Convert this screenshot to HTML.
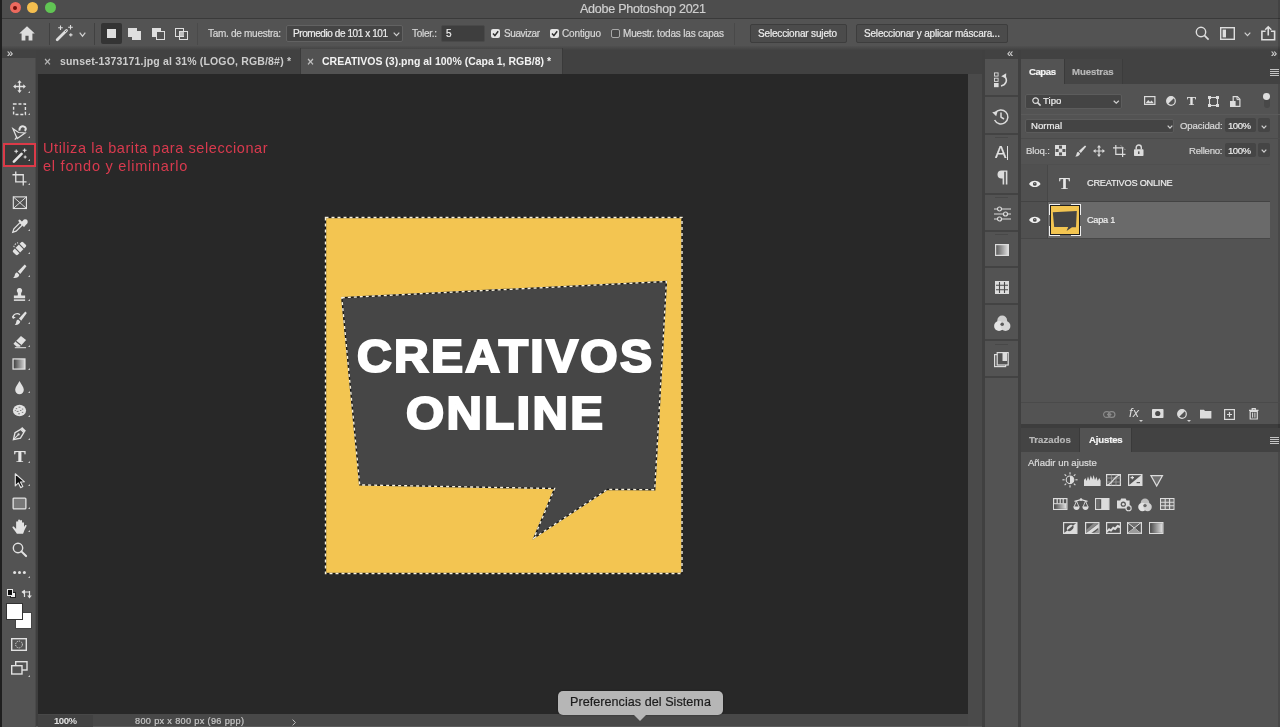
<!DOCTYPE html>
<html lang="es">
<head>
<meta charset="utf-8">
<title>Adobe Photoshop 2021</title>
<style>
*{box-sizing:border-box;margin:0;padding:0}
html,body{width:1280px;height:727px;overflow:hidden;background:#434343}
body{position:relative;font-family:"Liberation Sans",sans-serif;font-size:10px;color:#dcdcdc}
.a{position:absolute}
svg{position:absolute;overflow:visible}
.t{position:absolute;white-space:pre;will-change:transform;-webkit-text-stroke:0.2px currentColor}
.sep{position:absolute;width:1px;background:#404040}
.box{position:absolute;background:#454545;border:1px solid #626262;border-radius:2px}
.btn{position:absolute;background:#4b4b4b;border:1px solid #3d3d3d;border-radius:2px}
.cb{position:absolute;width:9px;height:9px;border-radius:2px;background:#e4e4e4}
.tri{position:absolute;width:0;height:0;border-left:2.5px solid transparent;border-bottom:2.5px solid #c4c4c4}
</style>
</head>
<body>
<div class="a" style="left:0px;top:0px;width:1280px;height:18px;background:#4d4d4d;"></div>
<div class="a" style="left:0px;top:17.5px;width:1280px;height:1.5px;background:#3a3a3a;"></div>
<div class="a" style="left:0px;top:19px;width:1280px;height:27px;background:#535353;"></div>
<div class="a" style="left:0px;top:46px;width:1280px;height:4px;background:linear-gradient(#505050,#424242);"></div>
<div class="a" style="left:982px;top:50px;width:298px;height:677px;background:#424242;"></div>
<div class="a" style="left:36px;top:50px;width:946px;height:24px;background:#414141;"></div>
<div class="a" style="left:36px;top:74px;width:3px;height:653px;background:#3e3e3e;"></div>
<div class="a" style="left:38px;top:74px;width:930px;height:640px;background:#282828;"></div>
<div class="a" style="left:968px;top:74px;width:14px;height:653px;background:#4a4a4a;"></div>
<div class="a" style="left:982px;top:50px;width:3px;height:677px;background:#404040;"></div>
<div class="a" style="left:38px;top:714px;width:930px;height:13px;background:#484848;"></div>
<div class="a" style="left:36px;top:726px;width:946px;height:1px;background:#5a5a5a;"></div>
<div class="a" style="left:2px;top:50px;width:34px;height:8px;background:#424242;"></div>
<div class="a" style="left:2px;top:58px;width:34px;height:669px;background:#535353;"></div>
<div class="a" style="left:35px;top:58px;width:1px;height:669px;background:#4a4a4a;"></div>
<div class="a" style="left:985px;top:59px;width:33px;height:668px;background:#535353;"></div>
<div class="a" style="left:1018px;top:50px;width:3px;height:677px;background:#404040;"></div>
<div class="a" style="left:1021px;top:59px;width:259px;height:365px;background:#535353;"></div>
<div class="a" style="left:1021px;top:424px;width:259px;height:4px;background:#3d3d3d;"></div>
<div class="a" style="left:1021px;top:428px;width:259px;height:299px;background:#535353;"></div>
<div class="a" style="left:1278px;top:0px;width:2px;height:727px;background:rgba(0,0,0,0.12);"></div>
<div class="a" style="left:0px;top:0px;width:2px;height:727px;background:#1f1f1f;"></div>
<div class="a" style="left:9.7px;top:2.4px;width:11px;height:11px;border-radius:50%;background:#ec6a5e"><div class="a" style="left:3.5px;top:3.5px;width:4px;height:4px;border-radius:50%;background:#6d0f0a"></div></div>
<div class="a" style="left:27.3px;top:2.4px;width:11px;height:11px;border-radius:50%;background:#f4be4f"></div>
<div class="a" style="left:45px;top:2.4px;width:11px;height:11px;border-radius:50%;background:#61c554"></div>
<div class="t" style="left:580px;top:2.0px;font-size:12.5px;line-height:15px;height:15px;letter-spacing:-0.246px;color:#d0d0d0;font-weight:400;font-family:'Liberation Sans',sans-serif;">Adobe Photoshop 2021</div>
<svg style="left:19px;top:26px" width="16" height="15" viewBox="0 0 16 15"><path d="M8 0.3 L0.2 7.6 H2.6 V14.6 H6.4 V9.8 H9.6 V14.6 H13.4 V7.6 H15.8 Z" fill="#dedede"/></svg>
<div class="a" style="left:49px;top:23px;width:1px;height:22px;background:#414141;"></div>
<svg style="left:55px;top:24px" width="20" height="18" viewBox="0 0 20 18"><path d="M2.2 15.8 L11.5 6.5" stroke="#dedede" stroke-width="2.8" stroke-linecap="round"/><path d="M10.2 7.8 L11.5 6.5" stroke="#535353" stroke-width="1" /><path d="M5.5 1.5 v4.6 M3.2 3.8 h4.6 M15.5 1 v4.6 M13.2 3.3 h4.6 M15.8 9.2 v3.4 M14.1 10.9 h3.4" stroke="#dedede" stroke-width="1.1"/></svg>
<svg style="left:79px;top:32px" width="7" height="5" viewBox="0 0 7 5"><path d="M0.7 0.7 L3.5 4.2 L6.3 0.7" fill="none" stroke="#d0d0d0" stroke-width="1.2"/></svg>
<div class="a" style="left:94px;top:23px;width:1px;height:22px;background:#414141;"></div>
<div class="a" style="left:101px;top:23px;width:21px;height:21px;background:#343434;border-radius:2px"></div>
<div class="a" style="left:107px;top:29px;width:9px;height:9px;background:#dedede;"></div>
<div class="a" style="left:128px;top:27.5px;width:9px;height:9px;background:#dedede;"></div>
<div class="a" style="left:132px;top:31px;width:9px;height:9px;background:#dedede;"></div>
<div class="a" style="left:152px;top:27.5px;width:9px;height:9px;background:#dedede;"></div>
<div class="a" style="left:155.5px;top:31px;width:9px;height:9px;background:#535353;border:1.5px solid #dedede"></div>
<div class="a" style="left:175px;top:27.5px;width:9px;height:9px;background:transparent;border:1.5px solid #dedede"></div>
<div class="a" style="left:178.5px;top:31px;width:9px;height:9px;background:transparent;border:1.5px solid #dedede"></div>
<div class="a" style="left:179.5px;top:32px;width:4px;height:4px;background:#bdbdbd;"></div>
<div class="a" style="left:197px;top:23px;width:1px;height:22px;background:#4a4a4a;"></div>
<div class="t" style="left:208px;top:27.5px;font-size:10px;line-height:12px;height:12px;letter-spacing:-0.284px;color:#d8d8d8;font-weight:400;font-family:'Liberation Sans',sans-serif;">Tam. de muestra:</div>
<div class="box" style="left:286px;top:25px;width:117px;height:17px"></div>
<div class="t" style="left:293px;top:27.5px;font-size:10px;line-height:12px;height:12px;letter-spacing:-0.420px;color:#ececec;font-weight:400;font-family:'Liberation Sans',sans-serif;">Promedio de 101 x 101</div>
<svg style="left:393px;top:32px" width="7" height="4.5" viewBox="0 0 7 4.5"><path d="M0.7 0.7 L3.5 3.7 L6.3 0.7" fill="none" stroke="#d0d0d0" stroke-width="1.2"/></svg>
<div class="t" style="left:412px;top:27.5px;font-size:10px;line-height:12px;height:12px;letter-spacing:-0.281px;color:#d8d8d8;font-weight:400;font-family:'Liberation Sans',sans-serif;">Toler.:</div>
<div class="a" style="left:441px;top:25px;width:44px;height:17px;background:#3e3e3e;border:1px solid #494949;border-radius:2px"></div>
<div class="t" style="left:445.5px;top:27.5px;font-size:10px;line-height:12px;height:12px;letter-spacing:-0.562px;color:#ececec;font-weight:400;font-family:'Liberation Sans',sans-serif;">5</div>
<div class="cb" style="left:491px;top:29px"></div>
<svg style="left:491px;top:29px" width="9" height="9" viewBox="0 0 9 9"><path d="M2 4.6 L3.9 6.6 L7.2 2.2" fill="none" stroke="#2e2e2e" stroke-width="1.5"/></svg>
<div class="t" style="left:504px;top:27.5px;font-size:10px;line-height:12px;height:12px;letter-spacing:-0.415px;color:#d8d8d8;font-weight:400;font-family:'Liberation Sans',sans-serif;">Suavizar</div>
<div class="cb" style="left:550px;top:29px"></div>
<svg style="left:550px;top:29px" width="9" height="9" viewBox="0 0 9 9"><path d="M2 4.6 L3.9 6.6 L7.2 2.2" fill="none" stroke="#2e2e2e" stroke-width="1.5"/></svg>
<div class="t" style="left:562px;top:27.5px;font-size:10px;line-height:12px;height:12px;letter-spacing:-0.147px;color:#d8d8d8;font-weight:400;font-family:'Liberation Sans',sans-serif;">Contiguo</div>
<div class="a" style="left:611px;top:29px;width:9px;height:9px;border:1px solid #a8a8a8;border-radius:2px;background:#484848"></div>
<div class="t" style="left:623px;top:27.5px;font-size:10px;line-height:12px;height:12px;letter-spacing:-0.185px;color:#d8d8d8;font-weight:400;font-family:'Liberation Sans',sans-serif;">Muestr. todas las capas</div>
<div class="a" style="left:734px;top:23px;width:1px;height:22px;background:#494949;"></div>
<div class="btn" style="left:750px;top:24px;width:97px;height:19px"></div>
<div class="t" style="left:758px;top:27.5px;font-size:10px;line-height:12px;height:12px;letter-spacing:-0.160px;color:#ececec;font-weight:400;font-family:'Liberation Sans',sans-serif;">Seleccionar sujeto</div>
<div class="btn" style="left:856px;top:24px;width:152px;height:19px"></div>
<div class="t" style="left:864px;top:27.5px;font-size:10px;line-height:12px;height:12px;letter-spacing:-0.185px;color:#ececec;font-weight:400;font-family:'Liberation Sans',sans-serif;">Seleccionar y aplicar m&aacute;scara...</div>
<svg style="left:1195px;top:26px" width="15" height="15" viewBox="0 0 15 15"><circle cx="6" cy="6" r="4.7" fill="none" stroke="#dedede" stroke-width="1.4"/><path d="M9.4 9.4 L13.6 13.6" stroke="#dedede" stroke-width="1.7"/></svg>
<svg style="left:1220px;top:27px" width="15" height="13" viewBox="0 0 15 13"><rect x="0.7" y="0.7" width="13.6" height="11.6" fill="none" stroke="#dedede" stroke-width="1.4"/><rect x="2.6" y="2.6" width="3.4" height="7.8" fill="#dedede"/></svg>
<svg style="left:1244px;top:32px" width="7" height="4.5" viewBox="0 0 7 4.5"><path d="M0.7 0.7 L3.5 3.7 L6.3 0.7" fill="none" stroke="#d0d0d0" stroke-width="1.2"/></svg>
<svg style="left:1261px;top:25.5px" width="14.5" height="14.5" viewBox="0 0 14.5 14.5"><path d="M4.6 5.2 H0.9 V13.7 H13.6 V5.2 H9.9" fill="none" stroke="#dedede" stroke-width="1.6"/><path d="M7.25 9.5 V1 M4.2 3.8 L7.25 0.8 L10.3 3.8" fill="none" stroke="#dedede" stroke-width="1.6"/></svg>
<div class="t" style="left:6.5px;top:47.0px;font-size:11px;line-height:13px;height:13px;letter-spacing:-0.125px;color:#d6d6d6;font-weight:400;font-family:'Liberation Sans',sans-serif;">&raquo;</div>
<div class="t" style="left:43.5px;top:54.5px;font-size:12px;line-height:14px;height:14px;letter-spacing:-0.016px;color:#bdbdbd;font-weight:400;font-family:'Liberation Sans',sans-serif;">&times;</div>
<div class="t" style="left:60px;top:55.0px;font-size:10.5px;line-height:13px;height:13px;letter-spacing:0.168px;color:#cdcdcd;font-weight:700;font-family:'Liberation Sans',sans-serif;-webkit-text-stroke:0;">sunset-1373171.jpg al 31% (LOGO, RGB/8#) *</div>
<div class="a" style="left:301px;top:48.5px;width:260.5px;height:25.5px;background:#525252;"></div>
<div class="a" style="left:300px;top:48px;width:1px;height:26px;background:#3a3a3a;"></div>
<div class="a" style="left:561.5px;top:48px;width:1px;height:26px;background:#3a3a3a;"></div>
<div class="t" style="left:307px;top:54.5px;font-size:12px;line-height:14px;height:14px;letter-spacing:-0.016px;color:#c8c8c8;font-weight:400;font-family:'Liberation Sans',sans-serif;">&times;</div>
<div class="t" style="left:322px;top:55.0px;font-size:10.5px;line-height:13px;height:13px;letter-spacing:-0.003px;color:#f2f2f2;font-weight:700;font-family:'Liberation Sans',sans-serif;-webkit-text-stroke:0;">CREATIVOS (3).png al 100% (Capa 1, RGB/8) *</div>
<div class="t" style="left:1007px;top:47.0px;font-size:11px;line-height:13px;height:13px;letter-spacing:-0.125px;color:#d6d6d6;font-weight:400;font-family:'Liberation Sans',sans-serif;">&laquo;</div>
<div class="t" style="left:1271px;top:47.0px;font-size:11px;line-height:13px;height:13px;letter-spacing:-0.125px;color:#d6d6d6;font-weight:400;font-family:'Liberation Sans',sans-serif;">&raquo;</div>
<div class="a" style="left:3px;top:142.5px;width:33px;height:24px;background:#3a3a3a;border:2px solid #dc3a48"></div>
<svg style="left:11.7px;top:79.0px" width="15" height="15" viewBox="0 0 16 16"><path d="M8 3 V13 M3 8 H13" stroke="#e2e2e2" stroke-width="1.4"/><path d="M8 1.2 L10.3 4 H5.7 Z M8 14.8 L10.3 12 H5.7 Z M1.2 8 L4 5.7 V10.3 Z M14.8 8 L12 5.7 V10.3 Z" fill="#e2e2e2"/></svg>
<div class="tri" style="left:28px;top:90.5px"></div>
<svg style="left:11.7px;top:101.5px" width="15" height="15" viewBox="0 0 16 16"><rect x="1.7" y="2.2" width="12.6" height="11.2" fill="none" stroke="#e2e2e2" stroke-width="1.5" stroke-dasharray="3.2 2"/></svg>
<div class="tri" style="left:28px;top:113px"></div>
<svg style="left:11.7px;top:124.5px" width="15" height="15" viewBox="0 0 16 16"><path d="M1 4 L5.5 14.5 L14 8.5 L7 8 Z" fill="none" stroke="#e2e2e2" stroke-width="1.3"/><path d="M8 6 C7.5 2.5 10 1 12.5 1.5 C15 2 15.5 5 13.5 6.2" fill="none" stroke="#e2e2e2" stroke-width="2.2"/><path d="M3 15.5 L5.5 12.5" stroke="#e2e2e2" stroke-width="1.3"/></svg>
<div class="tri" style="left:28px;top:136px"></div>
<svg style="left:11.7px;top:147.5px" width="15" height="15" viewBox="0 0 16 16"><path d="M2 14.5 L10.2 6.3" stroke="#e2e2e2" stroke-width="2.8" stroke-linecap="round"/><path d="M4.5 1.5 v4 M2.5 3.5 h4 M13.5 0.5 v4 M11.5 2.5 h4 M14 8 v3.2 M12.4 9.6 h3.2" stroke="#e2e2e2" stroke-width="1.1"/></svg>
<div class="tri" style="left:28px;top:159px"></div>
<svg style="left:11.7px;top:171.0px" width="15" height="15" viewBox="0 0 16 16"><path d="M4 0.5 V11.5 H15.5 M0.5 4 H12 V15.5" fill="none" stroke="#e2e2e2" stroke-width="1.4"/></svg>
<div class="tri" style="left:28px;top:182.5px"></div>
<svg style="left:11.7px;top:194.5px" width="15" height="15" viewBox="0 0 16 16"><rect x="1.4" y="2" width="14" height="12.4" fill="none" stroke="#e2e2e2" stroke-width="1.2"/><path d="M1.4 2 L15.4 14.4 M15.4 2 L1.4 14.4" stroke="#e2e2e2" stroke-width="1"/></svg>
<svg style="left:11.7px;top:217.5px" width="15" height="15" viewBox="0 0 16 16"><path d="M0.8 15.2 L2 11.6 L8.6 5 L11 7.4 L4.4 14 Z" fill="none" stroke="#e2e2e2" stroke-width="1.3"/><path d="M8 3 L13 8 M10.4 5.6 L12.6 3.4 a1.9 1.9 0 0 1 2.4 -0.6 a1.9 1.9 0 0 1 -0.4 3 L12.4 8" stroke="#e2e2e2" stroke-width="2.4" fill="#e2e2e2" stroke-linecap="round"/></svg>
<div class="tri" style="left:28px;top:229px"></div>
<svg style="left:11.7px;top:240.5px" width="15" height="15" viewBox="0 0 16 16"><g transform="rotate(-45 8 8)"><rect x="0.5" y="4.5" width="15" height="7" rx="1.5" fill="#e2e2e2"/><path d="M5 4.5 V11.5 M11 4.5 V11.5" stroke="#535353" stroke-width="1.2"/></g><path d="M2 6.5 A5 5 0 0 1 6.5 2" fill="none" stroke="#e2e2e2" stroke-width="1.1" stroke-dasharray="1.5 1.3"/></svg>
<div class="tri" style="left:28px;top:252px"></div>
<svg style="left:11.7px;top:263.5px" width="15" height="15" viewBox="0 0 16 16"><path d="M13.6 0.6 L15.4 2.4 L8.8 10.6 L6.2 8 Z" fill="#e2e2e2"/><path d="M5.4 9 L7.8 11.4 C7.4 14 4.5 15.4 1.2 14.8 C2.8 13.6 2.8 12 3.2 10.8 C3.6 9.6 4.6 9 5.4 9 Z" fill="#e2e2e2"/></svg>
<div class="tri" style="left:28px;top:275px"></div>
<svg style="left:11.7px;top:287.0px" width="15" height="15" viewBox="0 0 16 16"><path d="M8 1 a2.8 2.8 0 0 1 2.2 4.6 C9.6 6.6 9.6 8 10 9 H14 V12 H2 V9 H6 C6.4 8 6.4 6.6 5.8 5.6 A2.8 2.8 0 0 1 8 1 Z" fill="#e2e2e2"/><rect x="2" y="13.2" width="12" height="1.6" fill="#e2e2e2"/></svg>
<div class="tri" style="left:28px;top:298.5px"></div>
<svg style="left:11.7px;top:310.5px" width="15" height="15" viewBox="0 0 16 16"><path d="M14.2 0.6 L15.8 2.2 L9.8 10.4 L7.4 8 Z" fill="#e2e2e2"/><path d="M6.6 9 L8.8 11.2 C8.4 13.8 6 15.2 3 14.8 C4.4 13.6 4.4 12 4.7 10.9 C5 9.8 5.8 9 6.6 9 Z" fill="#e2e2e2"/><path d="M1 7.5 A4.5 4.5 0 0 1 8.5 4" fill="none" stroke="#e2e2e2" stroke-width="1.3"/><path d="M0 5 L1 8.6 L4 6.8 Z" fill="#e2e2e2"/></svg>
<div class="tri" style="left:28px;top:322px"></div>
<svg style="left:11.7px;top:333.5px" width="15" height="15" viewBox="0 0 16 16"><path d="M9.5 2 L15 6.5 L8.5 13.5 H5 L1.5 10.5 Z" fill="#e2e2e2"/><path d="M4.2 7.8 L9.8 12.2" stroke="#535353" stroke-width="1.2"/><path d="M3 14.6 H15" stroke="#e2e2e2" stroke-width="1.1"/></svg>
<div class="tri" style="left:28px;top:345px"></div>
<svg style="left:12px;top:357px" width="14" height="14" viewBox="0 0 16 16"><defs><linearGradient id="tg" x1="0" x2="1"><stop offset="0" stop-color="#3a3a3a"/><stop offset="1" stop-color="#d8d8d8"/></linearGradient></defs><rect x="1.2" y="2.2" width="13.6" height="11.6" fill="url(#tg)" stroke="#e2e2e2" stroke-width="1.4"/></svg>
<div class="tri" style="left:28px;top:368px"></div>
<svg style="left:11.7px;top:379.5px" width="15" height="15" viewBox="0 0 16 16"><path d="M8 1 C10 5 12.6 7.5 12.6 10.5 A4.6 4.6 0 0 1 3.4 10.5 C3.4 7.5 6 5 8 1 Z" fill="#e2e2e2"/></svg>
<div class="tri" style="left:28px;top:391px"></div>
<svg style="left:11.7px;top:403.0px" width="15" height="15" viewBox="0 0 16 16"><ellipse cx="8" cy="8" rx="7" ry="6.2" fill="#e2e2e2"/><path d="M4 6 h1.5 M7 4.5 h2 M10.5 6.5 h1.5 M5 9 h2 M8.5 8 h1.5 M6.5 11.5 h2 M10.5 10 h1.5 M3 8 h1" stroke="#777" stroke-width="1"/></svg>
<div class="tri" style="left:28px;top:414.5px"></div>
<svg style="left:11.7px;top:426.0px" width="15" height="15" viewBox="0 0 16 16"><path d="M1.5 14.5 L3.2 7.2 L9.2 3.6 L12.6 7 L9 13 Z" fill="none" stroke="#e2e2e2" stroke-width="1.4"/><path d="M1.8 14.2 L6.5 9.5" stroke="#e2e2e2" stroke-width="1.1"/><circle cx="7" cy="9" r="1.2" fill="#e2e2e2"/><path d="M10 2 L14 6" stroke="#e2e2e2" stroke-width="2.4"/></svg>
<div class="tri" style="left:28px;top:437.5px"></div>
<div class="t" style="left:13.8px;top:446.1px;font-size:17.5px;line-height:21px;height:21px;letter-spacing:0.512px;color:#e6e6e6;font-weight:700;font-family:'Liberation Serif',serif;">T</div>
<div class="tri" style="left:28px;top:461px"></div>
<svg style="left:11.7px;top:472.5px" width="15" height="15" viewBox="0 0 16 16"><path d="M3.5 0.8 L3.5 13.8 L6.8 10.6 L9.3 15.6 L11.5 14.5 L9 9.6 L13.3 9.4 Z" fill="#111" stroke="#e2e2e2" stroke-width="1.2" stroke-linejoin="round"/></svg>
<div class="tri" style="left:28px;top:484px"></div>
<svg style="left:11.7px;top:495.5px" width="15" height="15" viewBox="0 0 16 16"><rect x="1.2" y="2.2" width="13.6" height="11.6" rx="1" fill="#787878" stroke="#e2e2e2" stroke-width="1.4"/></svg>
<div class="tri" style="left:28px;top:507px"></div>
<svg style="left:12.299999999999999px;top:518.5px" width="15" height="15" viewBox="0 0 16 16"><path d="M5.2 15.6 C4 13.6 2 11.6 0.6 9.4 C0 8.2 1.4 7.4 2.4 8.4 L4.4 10.6 V3.4 a1.05 1.05 0 0 1 2.1 0 V7.6 V1.6 a1.05 1.05 0 0 1 2.1 0 V7.6 V2.2 a1.05 1.05 0 0 1 2.1 0 V8 V4.4 a1.05 1.05 0 0 1 2.1 0 V8.4 L14 6.6 C14.8 5.8 15.9 6.6 15.4 7.6 L13.2 12 C12.8 13.4 12.4 14.6 11.8 15.6 Z" fill="#e2e2e2"/></svg>
<div class="tri" style="left:28px;top:530px"></div>
<svg style="left:11.7px;top:541.5px" width="15" height="15" viewBox="0 0 16 16"><circle cx="6.4" cy="6.4" r="5" fill="none" stroke="#e2e2e2" stroke-width="1.5"/><path d="M10 10 L15 15" stroke="#e2e2e2" stroke-width="2.2" stroke-linecap="round"/></svg>
<svg style="left:11.7px;top:564.5px" width="15" height="15" viewBox="0 0 16 16"><circle cx="2.8" cy="8" r="1.6" fill="#e2e2e2"/><circle cx="8" cy="8" r="1.6" fill="#e2e2e2"/><circle cx="13.2" cy="8" r="1.6" fill="#e2e2e2"/></svg>
<div class="tri" style="left:28px;top:576px"></div>
<div class="a" style="left:9.5px;top:592px;width:6px;height:6px;background:#f0f0f0;border:0.5px solid #222"></div>
<div class="a" style="left:6.5px;top:589px;width:6.5px;height:6.5px;background:#0a0a0a;border:1px solid #e8e8e8"></div>
<svg style="left:21.5px;top:588.5px" width="10" height="10" viewBox="0 0 10 10"><path d="M2.5 8 V3 H7" fill="none" stroke="#e2e2e2" stroke-width="1.2"/><path d="M0.2 3.6 L2.5 0.4 L4.8 3.6 Z" transform="rotate(-90 2.5 3) translate(0 -0.5)" fill="#e2e2e2"/><path d="M7.5 2 V7.2" fill="none" stroke="#e2e2e2" stroke-width="1.2"/><path d="M5.2 6.4 L7.5 9.6 L9.8 6.4 Z" fill="#e2e2e2"/><path d="M0 3 L3 0.8 V5.2 Z" fill="#e2e2e2"/></svg>
<div class="a" style="left:15px;top:612px;width:16.5px;height:16.5px;background:#ffffff;border:1px solid #444"></div>
<div class="a" style="left:6px;top:603px;width:17px;height:16.5px;background:#ffffff;border:1px solid #333"></div>
<svg style="left:11px;top:638px" width="16" height="13" viewBox="0 0 16 13"><rect x="0.7" y="0.7" width="14.6" height="11.6" fill="none" stroke="#e2e2e2" stroke-width="1.4"/><circle cx="8" cy="6.5" r="3.4" fill="none" stroke="#e2e2e2" stroke-width="1" stroke-dasharray="1.2 1"/></svg>
<svg style="left:11px;top:661px" width="17" height="14" viewBox="0 0 17 14"><rect x="4.7" y="0.7" width="11.3" height="8.3" fill="none" stroke="#e2e2e2" stroke-width="1.4"/><rect x="0.7" y="4.7" width="10.3" height="8.3" fill="#535353" stroke="#e2e2e2" stroke-width="1.4"/></svg>
<div class="tri" style="left:28px;top:675px"></div>
<div class="t" style="left:43.2px;top:140.1px;font-size:14.5px;line-height:17px;height:17px;letter-spacing:0.578px;color:#d93a4e;font-weight:400;font-family:'Liberation Sans',sans-serif;-webkit-text-stroke:0;">Utiliza la barita para seleccionar</div>
<div class="t" style="left:43.2px;top:158.4px;font-size:14.5px;line-height:17px;height:17px;letter-spacing:0.767px;color:#d93a4e;font-weight:400;font-family:'Liberation Sans',sans-serif;-webkit-text-stroke:0;">el fondo y eliminarlo</div>
<svg style="left:0;top:0" width="1280" height="727" viewBox="0 0 1280 727"><rect x="325.5" y="217.5" width="356.5" height="356.0" fill="#f3c551"/><polygon points="341.8,297.7 666.4,281.5 654.7,489.7 607.3,489.4 534,538 554.6,488.5 359.7,484.9" fill="#464646"/><rect x="325.5" y="217.5" width="356.5" height="356.0" fill="none" stroke="#1a1a1a" stroke-width="1.4"/><rect x="325.5" y="217.5" width="356.5" height="356.0" fill="none" stroke="#f6f0dc" stroke-width="1.4" stroke-dasharray="3 3"/><polygon points="341.8,297.7 666.4,281.5 654.7,489.7 607.3,489.4 534,538 554.6,488.5 359.7,484.9" fill="none" stroke="#1a1a1a" stroke-width="1.4"/><polygon points="341.8,297.7 666.4,281.5 654.7,489.7 607.3,489.4 534,538 554.6,488.5 359.7,484.9" fill="none" stroke="#f6f0dc" stroke-width="1.4" stroke-dasharray="3 3"/></svg>
<div class="t" style="left:356.5px;top:328.9px;font-size:46px;line-height:55px;height:55px;letter-spacing:2.200px;color:#ffffff;font-weight:700;font-family:'Liberation Sans',sans-serif;transform:scaleX(1.0441);transform-origin:0 50%;-webkit-text-stroke:2.2px #fff;">CREATIVOS</div>
<div class="t" style="left:405.5px;top:386.1px;font-size:46px;line-height:55px;height:55px;letter-spacing:2.200px;color:#ffffff;font-weight:700;font-family:'Liberation Sans',sans-serif;transform:scaleX(1.0661);transform-origin:0 50%;-webkit-text-stroke:2.2px #fff;">ONLINE</div>
<div class="a" style="left:985px;top:94.5px;width:33px;height:2px;background:#434343;"></div>
<div class="a" style="left:985px;top:132.5px;width:33px;height:2px;background:#434343;"></div>
<div class="a" style="left:985px;top:192.5px;width:33px;height:2px;background:#434343;"></div>
<div class="a" style="left:985px;top:229.5px;width:33px;height:2px;background:#434343;"></div>
<div class="a" style="left:985px;top:266px;width:33px;height:2px;background:#434343;"></div>
<div class="a" style="left:985px;top:302.5px;width:33px;height:2px;background:#434343;"></div>
<div class="a" style="left:985px;top:339px;width:33px;height:2px;background:#434343;"></div>
<div class="a" style="left:985px;top:375.5px;width:33px;height:2px;background:#434343;"></div>
<div class="a" style="left:995px;top:137px;width:13px;height:1px;background:#484848;"></div>
<div class="a" style="left:995px;top:197px;width:13px;height:1px;background:#484848;"></div>
<div class="a" style="left:995px;top:234px;width:13px;height:1px;background:#484848;"></div>
<div class="a" style="left:995px;top:344px;width:13px;height:1px;background:#484848;"></div>
<svg style="left:993.5px;top:72px" width="15" height="15" viewBox="0 0 15 15"><rect x="0.5" y="0.9" width="3.6" height="3.2" fill="none" stroke="#dcdcdc" stroke-width="0.9"/><rect x="0.5" y="6.2" width="3.6" height="3.2" fill="none" stroke="#dcdcdc" stroke-width="0.9"/><rect x="0" y="11" width="4.6" height="4.2" fill="#dcdcdc"/><path d="M7 14 C12 13 14.5 8 10 3.5" fill="none" stroke="#dcdcdc" stroke-width="1.6"/><path d="M7.2 4.2 L12.2 1.2 L12 6.6 Z" fill="#dcdcdc"/></svg>
<svg style="left:992px;top:108px" width="17" height="17" viewBox="0 0 17 17"><path d="M3.2 4.8 A7 7 0 1 1 2.6 12" fill="none" stroke="#dcdcdc" stroke-width="1.5"/><path d="M0.2 4.2 L5.6 3.2 L4.2 8.2 Z" fill="#dcdcdc"/><path d="M9 4.5 V9.2 L12 11" fill="none" stroke="#dcdcdc" stroke-width="1.5"/></svg>
<div class="t" style="left:994.5px;top:142.5px;font-size:17px;line-height:20px;height:20px;letter-spacing:0.156px;color:#e2e2e2;font-weight:400;font-family:'Liberation Sans',sans-serif;">A</div>
<div class="a" style="left:1007.3px;top:145.5px;width:1.2px;height:14.5px;background:#e2e2e2;"></div>
<svg style="left:996.5px;top:170px" width="11" height="15" viewBox="0 0 11 15"><path d="M4.6 0.4 H10.4 V14.6 H8.8 V1.8 H7.2 V14.6 H5.6 V8.6 H4.6 A4.1 4.1 0 0 1 4.6 0.4 Z" fill="#dcdcdc"/></svg>
<svg style="left:993.5px;top:206px" width="17" height="16" viewBox="0 0 17 16"><path d="M0 3 H17 M0 8 H17 M0 13 H17" stroke="#dcdcdc" stroke-width="1.2"/><circle cx="5.5" cy="3" r="2" fill="#535353" stroke="#dcdcdc" stroke-width="1.2"/><circle cx="11.5" cy="8" r="2" fill="#535353" stroke="#dcdcdc" stroke-width="1.2"/><circle cx="5.5" cy="13" r="2" fill="#535353" stroke="#dcdcdc" stroke-width="1.2"/></svg>
<svg style="left:995px;top:244px" width="14" height="12" viewBox="0 0 14 12"><defs><linearGradient id="sg" x1="0" x2="1"><stop offset="0" stop-color="#555"/><stop offset="1" stop-color="#e0e0e0"/></linearGradient></defs><rect x="0.6" y="0.6" width="12.8" height="10.8" fill="url(#sg)" stroke="#dcdcdc" stroke-width="1.2"/></svg>
<svg style="left:995px;top:280.5px" width="14" height="13" viewBox="0 0 14 13"><rect x="0" y="0" width="14" height="13" fill="#dcdcdc"/><path d="M4.5 1 V12 M9.5 1 V12 M1 4.3 H13 M1 8.7 H13" stroke="#4a4a4a" stroke-width="1.1"/><rect x="5.6" y="5.2" width="2.8" height="2.6" fill="#dcdcdc"/></svg>
<svg style="left:993.5px;top:315px" width="16.5" height="16.5" viewBox="0 0 16.5 16.5"><circle cx="8.2" cy="5.4" r="4.9" fill="#cfcfcf"/><circle cx="5" cy="11" r="4.9" fill="#e4e4e4"/><circle cx="11.5" cy="11" r="4.9" fill="#d6d6d6"/><circle cx="8.2" cy="9.2" r="1.8" fill="#5a5a5a"/></svg>
<svg style="left:994px;top:352px" width="15" height="15.5" viewBox="0 0 15 15.5"><rect x="0.6" y="2.6" width="11" height="12" fill="none" stroke="#dcdcdc" stroke-width="1.2"/><rect x="3.2" y="0.6" width="11" height="12.4" fill="#535353" stroke="#dcdcdc" stroke-width="1.2"/><path d="M8.5 1 H13 V9 H8.5 Z" fill="#dcdcdc"/></svg>
<div class="a" style="left:1021px;top:59px;width:259px;height:25px;background:#424242;"></div>
<div class="a" style="left:1064px;top:59px;width:58px;height:25px;background:#454545;"></div>
<div class="a" style="left:1021px;top:59px;width:43px;height:26px;background:#535353;"></div>
<div class="a" style="left:1064px;top:59px;width:1px;height:25px;background:#3a3a3a;"></div>
<div class="a" style="left:1122px;top:59px;width:1px;height:25px;background:#3c3c3c;"></div>
<div class="t" style="left:1029px;top:65.7px;font-size:9.6px;line-height:12px;height:12px;letter-spacing:-0.449px;color:#f4f4f4;font-weight:700;font-family:'Liberation Sans',sans-serif;">Capas</div>
<div class="t" style="left:1072.4px;top:65.7px;font-size:9.6px;line-height:12px;height:12px;letter-spacing:-0.089px;color:#b8b8b8;font-weight:700;font-family:'Liberation Sans',sans-serif;">Muestras</div>
<div class="a" style="left:1270px;top:68.5px;width:9px;height:1px;background:#c4c4c4;"></div>
<div class="a" style="left:1270px;top:70.5px;width:9px;height:1px;background:#c4c4c4;"></div>
<div class="a" style="left:1270px;top:72.5px;width:9px;height:1px;background:#c4c4c4;"></div>
<div class="a" style="left:1270px;top:74.5px;width:9px;height:1px;background:#c4c4c4;"></div>
<div class="a" style="left:1025px;top:93.5px;width:96.5px;height:15px;background:#444444;border:1px solid #5c5c5c;border-radius:2px"></div>
<svg style="left:1031.5px;top:96.5px" width="9" height="9" viewBox="0 0 9 9"><circle cx="3.6" cy="3.6" r="2.8" fill="none" stroke="#dcdcdc" stroke-width="1.2"/><path d="M5.6 5.6 L8.6 8.6" stroke="#dcdcdc" stroke-width="1.5"/></svg>
<div class="t" style="left:1043.4px;top:95.0px;font-size:9.6px;line-height:12px;height:12px;letter-spacing:-0.004px;color:#ececec;font-weight:400;font-family:'Liberation Sans',sans-serif;">Tipo</div>
<svg style="left:1112.5px;top:99.5px" width="6.5" height="4" viewBox="0 0 6.5 4"><path d="M0.7 0.7 L3.25 3.2 L5.8 0.7" fill="none" stroke="#d0d0d0" stroke-width="1.2"/></svg>
<svg style="left:1144px;top:96.3px" width="11.5" height="9" viewBox="0 0 11.5 9"><rect x="0.6" y="0.6" width="10.3" height="7.8" fill="none" stroke="#dcdcdc" stroke-width="1.2"/><path d="M1.6 7.2 L4.2 4 L6 6 L7.6 4.6 L9.8 7.2 Z" fill="#dcdcdc"/></svg>
<svg style="left:1166px;top:96px" width="10" height="10" viewBox="0 0 10 10"><circle cx="5" cy="5" r="4.3" fill="none" stroke="#dcdcdc" stroke-width="1.2"/><path d="M8.04 1.96 A4.3 4.3 0 0 0 1.96 8.04 Z" fill="#dcdcdc"/></svg>
<div class="t" style="left:1187px;top:93.0px;font-size:13.5px;line-height:16px;height:16px;letter-spacing:0.784px;color:#e4e4e4;font-weight:700;font-family:'Liberation Serif',serif;">T</div>
<svg style="left:1208px;top:95.5px" width="11" height="11" viewBox="0 0 11 11"><rect x="1.5" y="1.5" width="8" height="8" fill="none" stroke="#dcdcdc" stroke-width="1.1"/><rect x="0" y="0" width="3" height="3" fill="#dcdcdc"/><rect x="8" y="0" width="3" height="3" fill="#dcdcdc"/><rect x="0" y="8" width="3" height="3" fill="#dcdcdc"/><rect x="8" y="8" width="3" height="3" fill="#dcdcdc"/></svg>
<svg style="left:1230.4px;top:95.5px" width="10.5" height="11" viewBox="0 0 10.5 11"><path d="M3.2 0.6 H7.4 L9.9 3.2 V10.4 H3.2 Z" fill="none" stroke="#dcdcdc" stroke-width="1.2"/><path d="M7 0.6 V3.6 H9.9" fill="none" stroke="#dcdcdc" stroke-width="1"/><rect x="0" y="5" width="5.6" height="6" fill="#dcdcdc"/></svg>
<div class="a" style="left:1263.6px;top:95px;width:6.6px;height:13.2px;background:#484848;border-radius:3.3px"></div>
<div class="a" style="left:1263.4px;top:93.2px;width:6.8px;height:6.8px;background:#dedede;border-radius:50%"></div>
<div class="a" style="left:1021px;top:114px;width:259px;height:1px;background:#5a5a5a;"></div>
<div class="a" style="left:1025px;top:118.5px;width:149px;height:14.5px;background:#444444;border:1px solid #5c5c5c;border-radius:2px"></div>
<div class="t" style="left:1030.6px;top:120.0px;font-size:9.6px;line-height:12px;height:12px;letter-spacing:0.036px;color:#ececec;font-weight:400;font-family:'Liberation Sans',sans-serif;">Normal</div>
<svg style="left:1166.5px;top:124.5px" width="6" height="4" viewBox="0 0 6 4"><path d="M0.7 0.7 L3.0 3.2 L5.3 0.7" fill="none" stroke="#d0d0d0" stroke-width="1.2"/></svg>
<div class="t" style="left:1179.5px;top:120.0px;font-size:9.6px;line-height:12px;height:12px;letter-spacing:-0.129px;color:#d8d8d8;font-weight:400;font-family:'Liberation Sans',sans-serif;">Opacidad:</div>
<div class="a" style="left:1225px;top:118px;width:31px;height:14.2px;background:#454545;border-radius:2px"></div>
<div class="t" style="left:1228.3px;top:120.0px;font-size:9.6px;line-height:12px;height:12px;letter-spacing:-0.516px;color:#ececec;font-weight:400;font-family:'Liberation Sans',sans-serif;">100%</div>
<div class="a" style="left:1258px;top:118px;width:11.5px;height:14.2px;background:#454545;border-radius:2px"></div>
<svg style="left:1260.8px;top:124.5px" width="6" height="4" viewBox="0 0 6 4"><path d="M0.7 0.7 L3.0 3.2 L5.3 0.7" fill="none" stroke="#d0d0d0" stroke-width="1.2"/></svg>
<div class="a" style="left:1021px;top:137.5px;width:259px;height:1px;background:#4b4b4b;"></div>
<div class="t" style="left:1025.5px;top:144.5px;font-size:9.6px;line-height:12px;height:12px;letter-spacing:-0.109px;color:#d8d8d8;font-weight:400;font-family:'Liberation Sans',sans-serif;">Bloq.:</div>
<svg style="left:1055px;top:145px" width="11" height="11" viewBox="0 0 11 11"><rect x="0" y="0" width="11" height="11" fill="#dcdcdc"/><rect x="4.0" y="0.6" width="3" height="3" fill="#555"/><rect x="0.6" y="4.0" width="3" height="3" fill="#555"/><rect x="7.3999999999999995" y="4.0" width="3" height="3" fill="#555"/><rect x="4.0" y="7.3999999999999995" width="3" height="3" fill="#555"/></svg>
<svg style="left:1075px;top:144.5px" width="11.5" height="12" viewBox="0 0 11.5 12"><path d="M10 0.4 L11.2 1.6 L5.8 8 L3.8 6 Z" fill="#dcdcdc"/><path d="M3.2 6.8 L5 8.6 C4.8 10.6 2.8 11.8 0.2 11.4 C1.4 10.6 1.4 9.4 1.7 8.5 C2 7.5 2.6 6.9 3.2 6.8 Z" fill="#dcdcdc"/></svg>
<svg style="left:1093px;top:144.5px" width="12" height="12" viewBox="0 0 12 12"><path d="M6 1.5 V10.5 M1.5 6 H10.5" stroke="#dcdcdc" stroke-width="1.2"/><path d="M6 0 L8 2.6 H4 Z M6 12 L8 9.4 H4 Z M0 6 L2.6 4 V8 Z M12 6 L9.4 4 V8 Z" fill="#dcdcdc"/></svg>
<svg style="left:1113px;top:144.5px" width="12.5" height="12" viewBox="0 0 12.5 12"><path d="M2.8 0 V9.4 H12.5 M0 2.8 H9.6 V12" fill="none" stroke="#dcdcdc" stroke-width="1.2"/><path d="M8 0.6 L12 4.6" stroke="#dcdcdc" stroke-width="1" stroke-dasharray="1.2 1"/></svg>
<svg style="left:1134px;top:144px" width="9.5" height="12" viewBox="0 0 9.5 12"><path d="M2.2 5.5 V3.6 a2.55 2.55 0 0 1 5.1 0 V5.5" fill="none" stroke="#dcdcdc" stroke-width="1.4"/><rect x="0" y="5.2" width="9.5" height="6.8" rx="0.8" fill="#dcdcdc"/><rect x="4" y="7.4" width="1.5" height="2.6" fill="#555"/></svg>
<div class="t" style="left:1188.7px;top:144.5px;font-size:9.6px;line-height:12px;height:12px;letter-spacing:-0.243px;color:#d8d8d8;font-weight:400;font-family:'Liberation Sans',sans-serif;">Relleno:</div>
<div class="a" style="left:1225px;top:142.6px;width:31px;height:14.2px;background:#454545;border-radius:2px"></div>
<div class="t" style="left:1228.3px;top:144.5px;font-size:9.6px;line-height:12px;height:12px;letter-spacing:-0.516px;color:#ececec;font-weight:400;font-family:'Liberation Sans',sans-serif;">100%</div>
<div class="a" style="left:1258px;top:142.6px;width:11.5px;height:14.2px;background:#454545;border-radius:2px"></div>
<svg style="left:1260.8px;top:149px" width="6" height="4" viewBox="0 0 6 4"><path d="M0.7 0.7 L3.0 3.2 L5.3 0.7" fill="none" stroke="#d0d0d0" stroke-width="1.2"/></svg>
<div class="a" style="left:1021px;top:163.5px;width:249px;height:1px;background:#4f4f4f;"></div>
<div class="a" style="left:1021px;top:164.5px;width:25.5px;height:73px;background:#505050;"></div>
<div class="a" style="left:1046.5px;top:164.5px;width:1px;height:73px;background:#474747;"></div>
<div class="a" style="left:1021px;top:201px;width:249px;height:1px;background:#434343;"></div>
<div class="a" style="left:1047.5px;top:202px;width:222.5px;height:35.5px;background:#6a6a6a;"></div>
<div class="a" style="left:1021px;top:237.5px;width:249px;height:1px;background:#474747;"></div>
<svg style="left:1028.5px;top:179.6px" width="11.6" height="7.8" viewBox="0 0 11.6 7.8"><path d="M0 3.9 C2.4 -0.2 9.2 -0.2 11.6 3.9 C9.2 8 2.4 8 0 3.9 Z" fill="#eeeeee"/><circle cx="5.8" cy="3.9" r="1.9" fill="#4a4a4a"/><circle cx="5.8" cy="3.3" r="0.6" fill="#bbb"/></svg>
<svg style="left:1028.5px;top:216.1px" width="11.6" height="7.8" viewBox="0 0 11.6 7.8"><path d="M0 3.9 C2.4 -0.2 9.2 -0.2 11.6 3.9 C9.2 8 2.4 8 0 3.9 Z" fill="#eeeeee"/><circle cx="5.8" cy="3.9" r="1.9" fill="#4a4a4a"/><circle cx="5.8" cy="3.3" r="0.6" fill="#bbb"/></svg>
<div class="t" style="left:1059px;top:173.6px;font-size:16.5px;line-height:20px;height:20px;letter-spacing:1.184px;color:#e6e6e6;font-weight:700;font-family:'Liberation Serif',serif;">T</div>
<div class="t" style="left:1086.7px;top:177.5px;font-size:9.2px;line-height:11px;height:11px;letter-spacing:-0.231px;color:#ececec;font-weight:400;font-family:'Liberation Sans',sans-serif;">CREATIVOS ONLINE</div>
<div class="t" style="left:1086.7px;top:214.5px;font-size:9.2px;line-height:11px;height:11px;letter-spacing:-0.268px;color:#f0f0f0;font-weight:400;font-family:'Liberation Sans',sans-serif;">Capa 1</div>
<div class="a" style="left:1049px;top:203.5px;width:32px;height:32.5px;background:#f0f0f0;"></div>
<div class="a" style="left:1048.5px;top:214.5px;width:33px;height:11.5px;background:#6a6a6a;"></div>
<div class="a" style="left:1060px;top:203px;width:10.7px;height:33.5px;background:#6a6a6a;"></div>
<div class="a" style="left:1050px;top:204.5px;width:30px;height:30.5px;background:#1e1e1e;"></div>
<div class="a" style="left:1051.2px;top:205.7px;width:27.6px;height:28.1px;background:#f3c551;"></div>
<svg style="left:1051.2px;top:205.7px" width="27.6" height="28.1" viewBox="0 0 27.6 28.1"><polygon points="1.8,6.2 25.8,5 25,21.2 21,21.2 15.6,25 17.2,21.1 3.2,20.9" fill="#454545"/></svg>
<div class="a" style="left:1021px;top:402px;width:259px;height:1px;background:#4a4a4a;"></div>
<svg style="left:1103px;top:410.5px" width="12.5" height="7" viewBox="0 0 12.5 7"><rect x="0.6" y="0.6" width="6.6" height="5.8" rx="2.9" fill="none" stroke="#8a8a8a" stroke-width="1.2"/><rect x="5.3" y="0.6" width="6.6" height="5.8" rx="2.9" fill="none" stroke="#8a8a8a" stroke-width="1.2"/><path d="M4 3.5 H8.5" stroke="#8a8a8a" stroke-width="1.2"/></svg>
<div class="t" style="left:1128.7px;top:405.7px;font-size:12.5px;line-height:15px;height:15px;letter-spacing:0.166px;color:#dcdcdc;font-weight:400;font-family:'Liberation Sans',sans-serif;font-style:italic;-webkit-text-stroke:0;">fx</div>
<div class="a" style="left:1138.5px;top:419.5px;width:0;height:0;border-left:2px solid transparent;border-right:2px solid transparent;border-top:2.5px solid #d0d0d0"></div>
<svg style="left:1152px;top:409px" width="11.5" height="9" viewBox="0 0 11.5 9"><rect x="0" y="0" width="11.5" height="9" rx="0.8" fill="#dcdcdc"/><circle cx="5.75" cy="4.5" r="2.6" fill="#4a4a4a"/></svg>
<svg style="left:1177px;top:409px" width="10" height="10" viewBox="0 0 10 10"><circle cx="5" cy="5" r="4.3" fill="none" stroke="#dcdcdc" stroke-width="1.2"/><path d="M8.04 1.96 A4.3 4.3 0 0 0 1.96 8.04 Z" fill="#dcdcdc"/></svg>
<div class="a" style="left:1187px;top:419.5px;width:0;height:0;border-left:2px solid transparent;border-right:2px solid transparent;border-top:2.5px solid #d0d0d0"></div>
<svg style="left:1199.8px;top:408.8px" width="11.4" height="9.4" viewBox="0 0 11.4 9.4"><path d="M0 0.8 H4 L5 2 H11.4 V9.4 H0 Z" fill="#dcdcdc"/></svg>
<svg style="left:1224px;top:408.5px" width="11" height="11" viewBox="0 0 11 11"><rect x="0.6" y="0.6" width="9.8" height="9.8" fill="none" stroke="#dcdcdc" stroke-width="1.2"/><path d="M5.5 3 V8 M3 5.5 H8" stroke="#dcdcdc" stroke-width="1.2"/></svg>
<svg style="left:1249px;top:408px" width="9.5" height="11.5" viewBox="0 0 9.5 11.5"><path d="M0 2.4 H9.5 M3.2 2.2 V0.6 H6.3 V2.2" fill="none" stroke="#dcdcdc" stroke-width="1.2"/><path d="M1.2 3.4 H8.3 V11 H1.2 Z" fill="none" stroke="#dcdcdc" stroke-width="1.2"/><path d="M3.6 4.6 V9.6 M5.9 4.6 V9.6" stroke="#dcdcdc" stroke-width="1"/></svg>
<div class="a" style="left:1021px;top:428px;width:259px;height:24px;background:#424242;"></div>
<div class="a" style="left:1021px;top:428px;width:58.5px;height:24px;background:#444444;"></div>
<div class="a" style="left:1080px;top:428px;width:50.5px;height:25px;background:#535353;"></div>
<div class="a" style="left:1079px;top:428px;width:1px;height:24px;background:#3a3a3a;"></div>
<div class="a" style="left:1130.5px;top:428px;width:1px;height:24px;background:#3a3a3a;"></div>
<div class="t" style="left:1029px;top:433.7px;font-size:9.6px;line-height:12px;height:12px;letter-spacing:0.029px;color:#b8b8b8;font-weight:700;font-family:'Liberation Sans',sans-serif;">Trazados</div>
<div class="t" style="left:1088.5px;top:433.7px;font-size:9.6px;line-height:12px;height:12px;letter-spacing:-0.159px;color:#f4f4f4;font-weight:700;font-family:'Liberation Sans',sans-serif;">Ajustes</div>
<div class="a" style="left:1270px;top:436.5px;width:9px;height:1px;background:#c4c4c4;"></div>
<div class="a" style="left:1270px;top:438.5px;width:9px;height:1px;background:#c4c4c4;"></div>
<div class="a" style="left:1270px;top:440.5px;width:9px;height:1px;background:#c4c4c4;"></div>
<div class="a" style="left:1270px;top:442.5px;width:9px;height:1px;background:#c4c4c4;"></div>
<div class="t" style="left:1028px;top:456.6px;font-size:9.6px;line-height:12px;height:12px;letter-spacing:-0.036px;color:#dcdcdc;font-weight:400;font-family:'Liberation Sans',sans-serif;">A&ntilde;adir un ajuste</div>
<svg style="left:1062.3px;top:472.2px" width="16" height="15.6" viewBox="0 0 16 15.6"><path d="M8 0.2 V2.4" stroke="#dcdcdc" stroke-width="1.1" transform="rotate(0 8 7.8)"/><path d="M8 0.2 V2.4" stroke="#dcdcdc" stroke-width="1.1" transform="rotate(45 8 7.8)"/><path d="M8 0.2 V2.4" stroke="#dcdcdc" stroke-width="1.1" transform="rotate(90 8 7.8)"/><path d="M8 0.2 V2.4" stroke="#dcdcdc" stroke-width="1.1" transform="rotate(135 8 7.8)"/><path d="M8 0.2 V2.4" stroke="#dcdcdc" stroke-width="1.1" transform="rotate(180 8 7.8)"/><path d="M8 0.2 V2.4" stroke="#dcdcdc" stroke-width="1.1" transform="rotate(225 8 7.8)"/><path d="M8 0.2 V2.4" stroke="#dcdcdc" stroke-width="1.1" transform="rotate(270 8 7.8)"/><path d="M8 0.2 V2.4" stroke="#dcdcdc" stroke-width="1.1" transform="rotate(315 8 7.8)"/><circle cx="8" cy="7.8" r="3.8" fill="none" stroke="#dcdcdc" stroke-width="1.1"/><path d="M8 4 A3.8 3.8 0 0 1 8 11.6 Z" fill="#dcdcdc"/></svg>
<svg style="left:1083.7px;top:474.5px" width="16.6" height="11" viewBox="0 0 16.6 11"><path d="M0 11 V5 L1.4 3 L2.6 6 L4 1.5 L5.4 5.5 L6.8 0.5 L8.3 4.5 L9.6 0 L11 5 L12.4 1.8 L13.8 6 L15.2 3 L16.6 5.5 V11 Z" fill="#dcdcdc"/></svg>
<svg style="left:1106px;top:474px" width="15" height="12" viewBox="0 0 15 12"><rect x="0.6" y="0.6" width="13.8" height="10.8" fill="none" stroke="#dcdcdc" stroke-width="1.2"/><path d="M5.4 0.6 V11.4 M10 0.6 V11.4 M0.6 4 H14.4 M0.6 8 H14.4" stroke="#9a9a9a" stroke-width="0.9"/><path d="M0.8 11.2 C6 11 8 1.5 14.2 0.8" fill="none" stroke="#dcdcdc" stroke-width="1.3"/></svg>
<svg style="left:1127.5px;top:474px" width="14.5" height="12" viewBox="0 0 14.5 12"><rect x="0.6" y="0.6" width="13.3" height="10.8" fill="none" stroke="#dcdcdc" stroke-width="1.2"/><path d="M14 0.6 L0.6 11.4 H14 Z" fill="#dcdcdc"/><path d="M2.6 3.6 H6 M4.3 1.9 V5.3" stroke="#dcdcdc" stroke-width="1.1"/><path d="M8.6 8.6 H12" stroke="#555" stroke-width="1.2"/></svg>
<svg style="left:1149.8px;top:474.5px" width="13.4" height="12" viewBox="0 0 13.4 12"><path d="M0.9 0.6 H12.5 L6.7 11 Z" fill="#707070" stroke="#dcdcdc" stroke-width="1.2"/></svg>
<svg style="left:1052.8px;top:498px" width="14.5" height="12" viewBox="0 0 14.5 12"><rect x="0.6" y="0.6" width="13.3" height="10.8" fill="none" stroke="#dcdcdc" stroke-width="1.2"/><defs><linearGradient id="hg" x1="0" x2="1"><stop offset="0" stop-color="#4a4a4a"/><stop offset="1" stop-color="#e0e0e0"/></linearGradient><linearGradient id="vg" x1="0" x2="0" y1="0" y2="1"><stop offset="0" stop-color="#e0e0e0"/><stop offset="1" stop-color="#4a4a4a"/></linearGradient></defs><rect x="1.2" y="6" width="12" height="4.8" fill="url(#hg)"/><path d="M4.2 0.6 V5.6 M7.2 0.6 V5.6 M10.2 0.6 V5.6" stroke="#dcdcdc" stroke-width="1.2"/><path d="M1 5.7 H13.5" stroke="#dcdcdc" stroke-width="1"/></svg>
<svg style="left:1073px;top:497.5px" width="16" height="13" viewBox="0 0 16 13"><path d="M1.5 3.4 L8 1.6 L14.5 3.4" fill="none" stroke="#dcdcdc" stroke-width="1.1"/><circle cx="8" cy="1.6" r="1.3" fill="#dcdcdc"/><path d="M3.5 3 L1 9 M3.5 3 L6 9 M12.5 3 L10 9 M12.5 3 L15 9" stroke="#dcdcdc" stroke-width="0.9"/><path d="M0.4 8.6 H6.6 A3.1 3.4 0 0 1 0.4 8.6 Z M9.4 8.6 H15.6 A3.1 3.4 0 0 1 9.4 8.6 Z" fill="#dcdcdc"/></svg>
<svg style="left:1095.4px;top:498px" width="14.5" height="12" viewBox="0 0 14.5 12"><rect x="0.6" y="0.6" width="13.3" height="10.8" fill="none" stroke="#dcdcdc" stroke-width="1.2"/><rect x="6.2" y="1" width="7.6" height="10" fill="#dcdcdc"/><rect x="1.2" y="1.2" width="3.6" height="9.6" fill="#6a6a6a"/></svg>
<svg style="left:1117px;top:498px" width="15" height="13.5" viewBox="0 0 15 13.5"><path d="M0 2.4 H3.2 L4.2 0.6 H8.6 L9.6 2.4 H12.6 V10.4 H0 Z" fill="#dcdcdc"/><circle cx="6.3" cy="6.2" r="2.6" fill="#5a5a5a"/><circle cx="6.3" cy="6.2" r="1.3" fill="#dcdcdc"/><circle cx="11.6" cy="10.2" r="2.6" fill="#535353" stroke="#dcdcdc" stroke-width="1.1"/></svg>
<svg style="left:1138px;top:497.5px" width="14" height="13.5" viewBox="0 0 14 13.5"><circle cx="7" cy="4.6" r="4.2" fill="#bdbdbd"/><circle cx="4.4" cy="9" r="4.2" fill="#e2e2e2"/><circle cx="9.6" cy="9" r="4.2" fill="#d0d0d0"/><circle cx="7" cy="7.6" r="1.7" fill="#666"/></svg>
<svg style="left:1159.8px;top:498px" width="14.5" height="12" viewBox="0 0 14.5 12"><rect x="0.6" y="0.6" width="13.3" height="10.8" fill="none" stroke="#dcdcdc" stroke-width="1.2"/><rect x="1.2" y="1.2" width="12.1" height="9.6" fill="#6e6e6e"/><path d="M5.2 0.6 V11.4 M9.6 0.6 V11.4 M0.6 4.2 H14 M0.6 7.8 H14" stroke="#dcdcdc" stroke-width="1.1"/></svg>
<svg style="left:1062.9px;top:522px" width="14.5" height="12" viewBox="0 0 14.5 12"><rect x="0.6" y="0.6" width="13.3" height="10.8" fill="none" stroke="#dcdcdc" stroke-width="1.2"/><path d="M0.6 11.4 L13.9 0.6 V11.4 Z" fill="#dcdcdc"/><ellipse cx="7.2" cy="6" rx="3.6" ry="2.6" transform="rotate(-38 7.2 6)" fill="#dcdcdc"/><path d="M7.2 6 m-3 2.2 a3.6 2.6 -38 0 0 5.8 -4.6 Z" fill="#555"/></svg>
<svg style="left:1084.8px;top:522px" width="14.5" height="12" viewBox="0 0 14.5 12"><rect x="0.6" y="0.6" width="13.3" height="10.8" fill="none" stroke="#dcdcdc" stroke-width="1.2"/><path d="M1 8 L9 1 H13.8 L1 11 Z" fill="#8a8a8a"/><path d="M1 11.2 L13.8 1.4 V5.5 L6 11.2 Z" fill="#dcdcdc"/><path d="M8.5 11.2 L13.8 7 V11.2 Z" fill="#9a9a9a"/></svg>
<svg style="left:1106px;top:522px" width="15" height="12" viewBox="0 0 15 12"><rect x="0.6" y="0.6" width="13.8" height="10.8" fill="none" stroke="#dcdcdc" stroke-width="1.2"/><path d="M0.8 8.4 L3 6 L4.8 7.2 L7 4.4 L9 5.6 L11.4 2.8 L14 3.8 V6 L11.6 5.6 L9.4 8.2 L7.2 7.2 L5.2 9.8 L3.2 8.8 L0.8 10.8 Z" fill="#dcdcdc"/></svg>
<svg style="left:1127.4px;top:522px" width="15" height="12" viewBox="0 0 15 12"><rect x="0.6" y="0.6" width="13.8" height="10.8" fill="none" stroke="#dcdcdc" stroke-width="1.2"/><path d="M0.8 0.8 L7.4 6.4 L14 0.8 Z" fill="#6e6e6e"/><path d="M0.6 0.6 L13.9 11.4 M13.9 0.6 L0.6 11.4" stroke="#dcdcdc" stroke-width="1"/><path d="M0.8 11.2 L7.4 6 L14 11.2 Z" fill="#9a9a9a"/></svg>
<svg style="left:1149.2px;top:522px" width="14.5" height="12" viewBox="0 0 14.5 12"><rect x="0.6" y="0.6" width="13.3" height="10.8" fill="none" stroke="#dcdcdc" stroke-width="1.2"/><rect x="1.2" y="1.2" width="12.1" height="9.6" fill="url(#hg)"/></svg>
<div class="a" style="left:38px;top:714.5px;width:55px;height:12px;background:#424242;"></div>
<div class="t" style="left:54px;top:715.3px;font-size:9.6px;line-height:12px;height:12px;letter-spacing:-0.516px;color:#e0e0e0;font-weight:700;font-family:'Liberation Sans',sans-serif;-webkit-text-stroke:0;">100%</div>
<div class="t" style="left:135px;top:716.1px;font-size:9.2px;line-height:11px;height:11px;letter-spacing:0.319px;color:#c8c8c8;font-weight:400;font-family:'Liberation Sans',sans-serif;">800 px x 800 px (96 ppp)</div>
<svg style="left:291.5px;top:718.5px" width="4" height="7" viewBox="0 0 4 7"><path d="M0.6 0.6 L3.4 3.5 L0.6 6.4" fill="none" stroke="#c0c0c0" stroke-width="1"/></svg>
<div class="a" style="left:557.5px;top:691px;width:165.5px;height:23.5px;background:#b6b6b6;border-radius:5px;box-shadow:0 0 2px rgba(0,0,0,0.45)"></div>
<div class="a" style="left:633px;top:714.3px;width:0;height:0;border-left:7px solid transparent;border-right:7px solid transparent;border-top:7.2px solid #b6b6b6"></div>
<div class="t" style="left:569.6px;top:694.8px;font-size:12.6px;line-height:15px;height:15px;letter-spacing:0.039px;color:#1c1c1c;font-weight:400;font-family:'Liberation Sans',sans-serif;">Preferencias del Sistema</div>
</body>
</html>
